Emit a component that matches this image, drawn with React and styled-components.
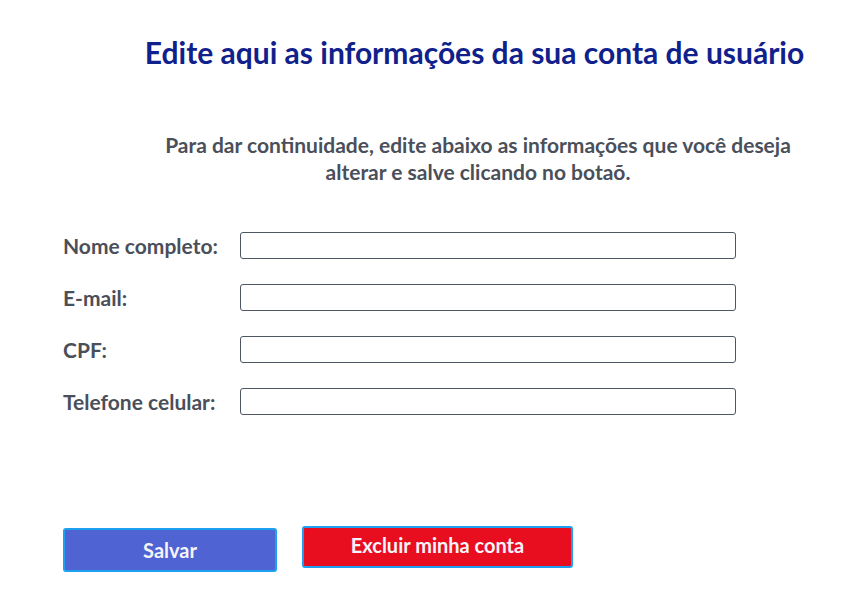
import React from "react";
import styled, { createGlobalStyle } from "styled-components";

const Global = createGlobalStyle`
  body {
    margin: 0;
    background: #ffffff;
    font-family: Lato, "Open Sans", sans-serif;
  }
`;

const Page = styled.main`
  width: 830px;
  padding: 30px 0 0 63px;
  box-sizing: content-box;
`;

const Title = styled.h1`
  margin: 0;
  padding-right: 7px;
  text-align: center;
  font-size: 30px;
  font-weight: 700;
  color: #10218c;
  line-height: 44px;
`;

const Intro = styled.p`
  margin: 57px auto 0;
  width: 660px;
  text-align: center;
  font-size: 21px;
  font-weight: 700;
  color: #4a4f5a;
  line-height: 27px;
`;

const Form = styled.form`
  margin-top: 47px;
  display: grid;
  grid-template-columns: 177px 496px;
  row-gap: 25px;
  align-items: center;
`;

const Label = styled.label`
  font-size: 21px;
  font-weight: 700;
  color: #4a4f5a;
`;

const Input = styled.input`
  box-sizing: border-box;
  width: 496px;
  height: 27px;
  border: 1px solid #4d5663;
  border-radius: 3px;
  background: #fff;
  font-family: inherit;
  font-size: 14px;
  padding: 0 6px;
`;

const Actions = styled.div`
  margin-top: 111px;
  display: flex;
  align-items: flex-start;
  gap: 25px;
`;

const Button = styled.button`
  box-sizing: border-box;
  width: ${(p) => p.$w}px;
  height: ${(p) => p.$h}px;
  margin-top: ${(p) => p.$mt || 0}px;
  background: ${(p) => p.$bg};
  border: 2px solid #1ea0f0;
  border-radius: 3px;
  color: #f4f4fa;
  font-family: Lato, sans-serif;
  font-size: 20px;
  font-weight: 700;
  padding: ${(p) => (p.$pb ? `0 0 ${p.$pb}px` : 0)};
  cursor: pointer;
`;

const fields = ["Nome completo:", "E-mail:", "CPF:", "Telefone celular:"];

export default function App() {
  return (
    <Page>
      <Global />
      <Title>Edite aqui as informações da sua conta de usuário</Title>
      <Intro>
        Para dar continuidade, edite abaixo as informações que você deseja
        alterar e salve clicando no botaõ.
      </Intro>
      <Form onSubmit={(e) => e.preventDefault()}>
        {fields.map((f) => (
          <React.Fragment key={f}>
            <Label>{f}</Label>
            <Input type="text" />
          </React.Fragment>
        ))}
      </Form>
      <Actions>
        <Button $w={214} $h={44} $mt={2} $bg="#4f63d2">Salvar</Button>
        <Button $w={271} $h={42} $bg="#e80e20" $pb={4}>Excluir minha conta</Button>
      </Actions>
    </Page>
  );
}
